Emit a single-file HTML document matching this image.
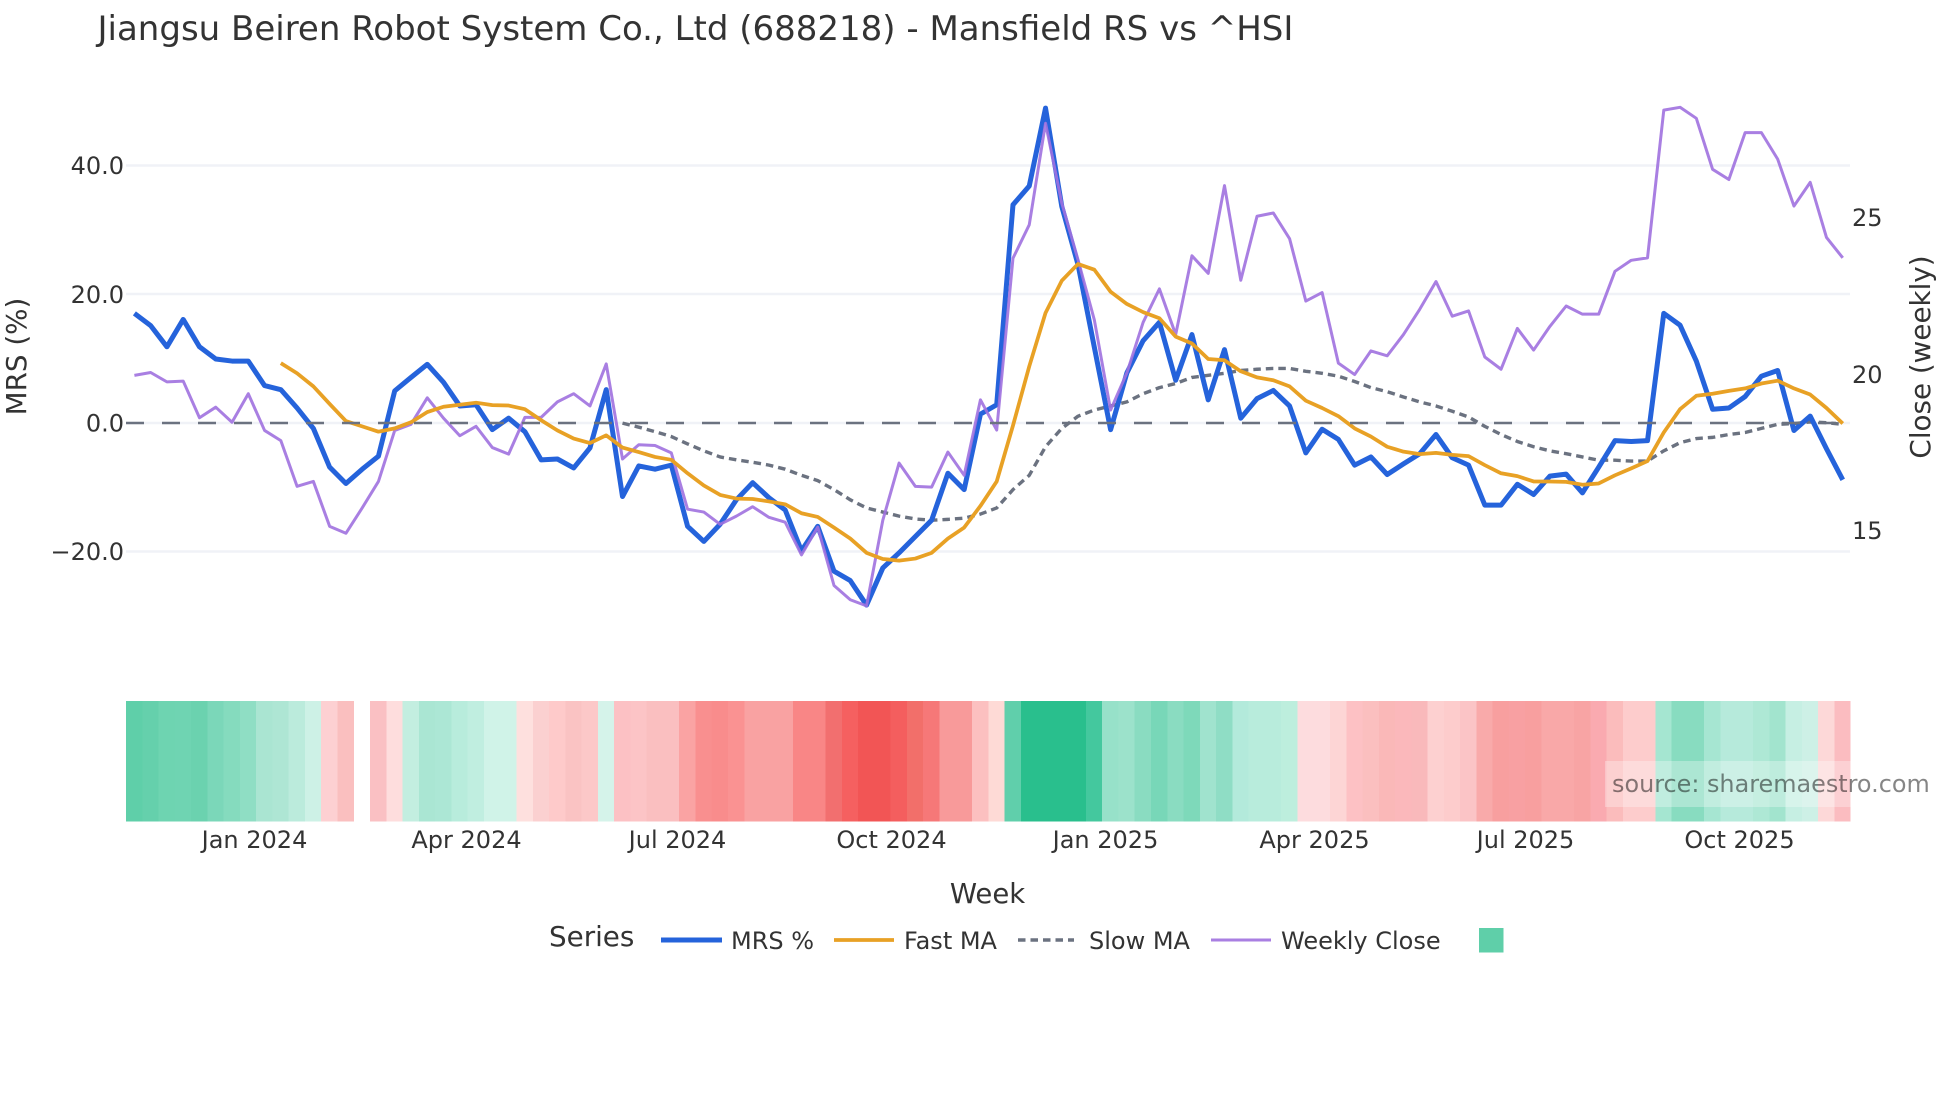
<!DOCTYPE html>
<html lang="en"><head><meta charset="utf-8"><title>Mansfield RS</title>
<style>
html,body{margin:0;padding:0;background:#fff;width:1960px;height:1102px;overflow:hidden}
svg{display:block}
text{font-family:"DejaVu Sans",sans-serif;fill:#333}
.l{fill:none;vector-effect:non-scaling-stroke;stroke-linejoin:round}
</style></head><body>
<svg width="1960" height="1102" viewBox="0 0 1960 1102" xmlns="http://www.w3.org/2000/svg">
<rect width="1960" height="1102" fill="#fff"/>
<text x="97.5" y="40" font-size="34">Jiangsu Beiren Robot System Co., Ltd (688218) - Mansfield RS vs ^HSI</text>
<g stroke="#f0f2f7" stroke-width="2.5">
<line x1="126" x2="1850" y1="165.5" y2="165.5"/><line x1="126" x2="1850" y1="294" y2="294"/><line x1="126" x2="1850" y1="423" y2="423"/><line x1="126" x2="1850" y1="551.5" y2="551.5"/>
</g>
<g font-size="24" text-anchor="end">
<text x="124" y="174">40.0</text><text x="124" y="303">20.0</text><text x="124" y="431.5">0.0</text><text x="124" y="560">−20.0</text>
</g>
<g font-size="24">
<text x="1852" y="226">25</text><text x="1852" y="383">20</text><text x="1852" y="539">15</text>
</g>
<text font-size="27.75" text-anchor="middle" transform="translate(26,356.5) rotate(-90)">MRS (%)</text>
<text font-size="27.75" text-anchor="middle" transform="translate(1930,357) rotate(-90)">Close (weekly)</text>
<g transform="translate(134.4,0) scale(16.27,0.408)">
<polyline class="l" stroke="#6b7280" stroke-width="3.4" stroke-dasharray="7.5 5" points="30,1037 31,1047 32,1058 33,1070 34,1088 35,1105 36,1120 37,1127 38,1133 39,1140 40,1150 41,1165 42,1178 43,1200 44,1225 45,1245 46,1255 47,1265 48,1272 49,1275 50,1273 51,1270 52,1260 53,1245 54,1200 55,1165 56,1095 57,1050 58,1020 59,1005 60,995 61,985 62,965 63,950 64,940 65,925 66,920 67,915 68,908 69,905 70,903 71,903 72,910 73,915 74,922 75,935 76,950 77,960 78,973 79,985 80,995 81,1008 82,1022 83,1045 84,1065 85,1082 86,1095 87,1105 88,1112 89,1120 90,1128 91,1128 92,1130 93,1130 94,1105 95,1085 96,1075 97,1072 98,1065 99,1060 100,1050 101,1040 102,1038 103,1034 104,1036 105,1040"/>
<polyline class="l" stroke="#2563db" stroke-width="5" points="0,768 1,798 2,850 3,783 4,850 5,880 6,885 7,885 8,945 9,955 10,1000 11,1050 12,1145 13,1185 14,1150 15,1118 16,958 17,925 18,893 19,937 20,995 21,992 22,1053 23,1025 24,1058 25,1127 26,1125 27,1147 28,1098 29,955 30,1217 31,1142 32,1150 33,1140 34,1290 35,1327 36,1285 37,1225 38,1183 39,1220 40,1250 41,1350 42,1290 43,1400 44,1423 45,1483 46,1392 47,1355 48,1315 49,1275 50,1160 51,1200 52,1015 53,992 54,502 55,456 56,265 57,506 58,649 59,851 60,1053 61,914 62,835 63,790 64,932 65,820 66,980 67,857 68,1025 69,977 70,957 71,995 72,1110 73,1052 74,1077 75,1140 76,1120 77,1163 78,1137 79,1112 80,1065 81,1122 82,1140 83,1238 84,1238 85,1187 86,1212 87,1167 88,1162 89,1208 90,1145 91,1080 92,1082 93,1080 94,768 95,797 96,885 97,1003 98,1000 99,972 100,922 101,908 102,1055 103,1020 104,1100 105,1176"/>
<polyline class="l" stroke="#a071df" stroke-opacity=".9" stroke-width="3" points="0,920 1,913 2,936 3,934 4,1024 5,998 6,1035 7,965 8,1055 9,1080 10,1192 11,1180 12,1290 13,1307 14,1245 15,1180 16,1055 17,1040 18,975 19,1025 20,1068 21,1045 22,1097 23,1113 24,1023 25,1023 26,985 27,965 28,995 29,892 30,1125 31,1090 32,1092 33,1110 34,1248 35,1255 36,1285 37,1265 38,1242 39,1268 40,1280 41,1360 42,1292 43,1435 44,1470 45,1485 46,1275 47,1135 48,1192 49,1194 50,1108 51,1165 52,980 53,1054 54,633 55,551 56,302 57,498 58,637 59,784 60,1005 61,914 62,790 63,708 64,820 65,627 66,670 67,455 68,687 69,530 70,522 71,585 72,738 73,717 74,890 75,918 76,860 77,872 78,820 79,758 80,690 81,775 82,762 83,875 84,905 85,805 86,858 87,800 88,750 89,770 90,770 91,665 92,638 93,632 94,270 95,263 96,290 97,415 98,440 99,325 100,325 101,390 102,505 103,447 104,582 105,632"/>
<polyline class="l" stroke="#e8a125" stroke-width="3.75" points="9,890 10,915 11,947 12,990 13,1032 14,1045 15,1058 16,1050 17,1035 18,1010 19,997 20,992 21,987 22,993 23,994 24,1003 25,1030 26,1055 27,1075 28,1086 29,1067 30,1097 31,1108 32,1120 33,1127 34,1160 35,1190 36,1213 37,1222 38,1223 39,1229 40,1236 41,1258 42,1267 43,1293 44,1320 45,1355 46,1370 47,1374 48,1369 49,1355 50,1320 51,1293 52,1240 53,1180 54,1043 55,898 56,767 57,688 58,647 59,661 60,715 61,745 62,765 63,780 64,825 65,842 66,880 67,883 68,910 69,925 70,932 71,947 72,982 73,1000 74,1020 75,1050 76,1070 77,1095 78,1107 79,1113 80,1110 81,1115 82,1118 83,1140 84,1160 85,1167 86,1180 87,1180 88,1181 89,1188 90,1185 91,1165 92,1148 93,1130 94,1060 95,1003 96,970 97,965 98,958 99,952 100,940 101,933 102,952 103,967 104,1000 105,1038"/>
</g>
<line x1="126" x2="1850" y1="423" y2="423" stroke="#6b7280" stroke-width="2.5" stroke-dasharray="18 18"/>
<g transform="translate(126,701) scale(16.27,120.5)" shape-rendering="crispEdges">
<rect x="0" width="1.02" height="1" fill="#5fcfa9"/><rect x="1" width="1.02" height="1" fill="#65d0ac"/><rect x="2" width="1.02" height="1" fill="#6ed4b1"/><rect x="3" width="1.02" height="1" fill="#6fd4b2"/><rect x="4" width="1.02" height="1" fill="#6bd2af"/><rect x="5" width="1.02" height="1" fill="#7bd7b9"/><rect x="6" width="1.02" height="1" fill="#85dbbe"/><rect x="7" width="1.02" height="1" fill="#8fdec4"/><rect x="8" width="1.02" height="1" fill="#aae5d2"/><rect x="9" width="1.02" height="1" fill="#aee6d4"/><rect x="10" width="1.02" height="1" fill="#bbebdc"/><rect x="11" width="1.02" height="1" fill="#cdf1e6"/>
<rect x="12" width="1.02" height="1" fill="#fdd0d2"/><rect x="13" width="1" height="1" fill="#fabfbf"/>
<rect x="15" width="1.02" height="1" fill="#fac0c3"/><rect x="16" width="1.02" height="1" fill="#fedddd"/><rect x="17" width="1.02" height="1" fill="#c3eee0"/><rect x="18" width="1.02" height="1" fill="#aae6d3"/><rect x="19" width="1.02" height="1" fill="#ace7d5"/><rect x="20" width="1.02" height="1" fill="#b8ecdc"/><rect x="21" width="1.02" height="1" fill="#c0eee0"/><rect x="22" width="1.02" height="1" fill="#d0f3e8"/><rect x="23" width="1.02" height="1" fill="#d0f3e8"/><rect x="24" width="1.02" height="1" fill="#fee0de"/><rect x="25" width="1.02" height="1" fill="#fbd0d0"/><rect x="26" width="1.02" height="1" fill="#fecaca"/><rect x="27" width="1.02" height="1" fill="#fac3c3"/><rect x="28" width="1.02" height="1" fill="#fcc8c8"/><rect x="29" width="1.02" height="1" fill="#d5f3ea"/><rect x="30" width="1.02" height="1" fill="#fcc1c4"/><rect x="31" width="1.02" height="1" fill="#fcc4c6"/><rect x="32" width="1.02" height="1" fill="#fabfc0"/><rect x="33" width="1.02" height="1" fill="#fabfc0"/><rect x="34" width="1.02" height="1" fill="#faa3a3"/><rect x="35" width="1.02" height="1" fill="#f98f8f"/><rect x="36" width="1.02" height="1" fill="#f98c8c"/><rect x="37" width="1.02" height="1" fill="#fa9292"/><rect x="38" width="1.02" height="1" fill="#f9a2a2"/><rect x="39" width="1.02" height="1" fill="#f9a2a2"/><rect x="40" width="1.02" height="1" fill="#f9a2a2"/><rect x="41" width="1.02" height="1" fill="#f98686"/><rect x="42" width="1.02" height="1" fill="#f98686"/><rect x="43" width="1.02" height="1" fill="#f26f6f"/><rect x="44" width="1.02" height="1" fill="#f56060"/><rect x="45" width="1.02" height="1" fill="#f25555"/><rect x="46" width="1.02" height="1" fill="#f25555"/><rect x="47" width="1.02" height="1" fill="#f45e5e"/><rect x="48" width="1.02" height="1" fill="#f26f6a"/><rect x="49" width="1.02" height="1" fill="#f67878"/><rect x="50" width="1.02" height="1" fill="#f89a9a"/><rect x="51" width="1.02" height="1" fill="#f89a9a"/><rect x="52" width="1.02" height="1" fill="#fcc0c0"/><rect x="53" width="1.02" height="1" fill="#fedad6"/><rect x="54" width="1.02" height="1" fill="#60cfab"/><rect x="55" width="1.02" height="1" fill="#29bf8d"/><rect x="56" width="1.02" height="1" fill="#29bf8d"/><rect x="57" width="1.02" height="1" fill="#29bf8d"/><rect x="58" width="1.02" height="1" fill="#29bf8d"/><rect x="59" width="1.02" height="1" fill="#44c89e"/><rect x="60" width="1.02" height="1" fill="#97e1c9"/><rect x="61" width="1.02" height="1" fill="#9ce2cb"/><rect x="62" width="1.02" height="1" fill="#8adcc1"/><rect x="63" width="1.02" height="1" fill="#78d7b8"/><rect x="64" width="1.02" height="1" fill="#8adcc1"/><rect x="65" width="1.02" height="1" fill="#7ed9ba"/><rect x="66" width="1.02" height="1" fill="#a0e3ce"/><rect x="67" width="1.02" height="1" fill="#8fddc5"/><rect x="68" width="1.02" height="1" fill="#b3eadb"/><rect x="69" width="1.02" height="1" fill="#b8ecdc"/><rect x="70" width="1.02" height="1" fill="#b8ecdc"/><rect x="71" width="1.02" height="1" fill="#bdeedd"/><rect x="72" width="1.02" height="1" fill="#fddcde"/><rect x="73" width="1.02" height="1" fill="#fddcde"/><rect x="74" width="1.02" height="1" fill="#fdd5d5"/><rect x="75" width="1.02" height="1" fill="#fdc1c4"/><rect x="76" width="1.02" height="1" fill="#fbbfbf"/><rect x="77" width="1.02" height="1" fill="#fab8b8"/><rect x="78" width="1.02" height="1" fill="#fbb8bb"/><rect x="79" width="1.02" height="1" fill="#f9b9bb"/><rect x="80" width="1.02" height="1" fill="#fdd0d0"/><rect x="81" width="1.02" height="1" fill="#fdcccc"/><rect x="82" width="1.02" height="1" fill="#fbc4c6"/><rect x="83" width="1.02" height="1" fill="#f9aaaa"/><rect x="84" width="1.02" height="1" fill="#f89f9f"/><rect x="85" width="1.02" height="1" fill="#f8a0a2"/><rect x="86" width="1.02" height="1" fill="#f89f9f"/><rect x="87" width="1.02" height="1" fill="#f9a8a8"/><rect x="88" width="1.02" height="1" fill="#f9a8a8"/><rect x="89" width="1.02" height="1" fill="#f8a4a4"/><rect x="90" width="1.02" height="1" fill="#faaab0"/><rect x="91" width="1.02" height="1" fill="#fbbcbc"/><rect x="92" width="1.02" height="1" fill="#fdcccc"/><rect x="93" width="1.02" height="1" fill="#fdcccc"/><rect x="94" width="1.02" height="1" fill="#a5e6d1"/><rect x="95" width="1.02" height="1" fill="#88dcc0"/><rect x="96" width="1.02" height="1" fill="#88dcc0"/><rect x="97" width="1.02" height="1" fill="#a6e6d2"/><rect x="98" width="1.02" height="1" fill="#b6eadb"/><rect x="99" width="1.02" height="1" fill="#b6eadb"/><rect x="100" width="1.02" height="1" fill="#aee8d5"/><rect x="101" width="1.02" height="1" fill="#a2e4ce"/><rect x="102" width="1.02" height="1" fill="#c6efe3"/><rect x="103" width="1.02" height="1" fill="#cdf0e6"/><rect x="104" width="1.02" height="1" fill="#fdd8d8"/><rect x="105" width="1" height="1" fill="#fbbcc0"/>
</g>
<rect x="1605" y="761" width="249" height="46" fill="#fff" fill-opacity=".3"/>
<text x="1612" y="792" font-size="23.9" style="fill:#000" fill-opacity=".48">source: sharemaestro.com</text>
<g font-size="24" text-anchor="middle">
<text x="254.5" y="848">Jan 2024</text><text x="466.5" y="848">Apr 2024</text><text x="677.5" y="848">Jul 2024</text><text x="891.5" y="848">Oct 2024</text><text x="1105.5" y="848">Jan 2025</text><text x="1314.5" y="848">Apr 2025</text><text x="1525.5" y="848">Jul 2025</text><text x="1739.5" y="848">Oct 2025</text>
</g>
<text x="987.5" y="903" font-size="27.5" text-anchor="middle">Week</text>
<text x="549" y="946" font-size="27.75">Series</text>
<line x1="661" x2="722" y1="940" y2="940" stroke="#2563db" stroke-width="5"/>
<text x="731" y="949" font-size="24">MRS %</text>
<line x1="834" x2="894" y1="940" y2="940" stroke="#e8a125" stroke-width="3.75"/>
<text x="904" y="949" font-size="24">Fast MA</text>
<line x1="1018" x2="1074" y1="940" y2="940" stroke="#6b7280" stroke-width="3.4" stroke-dasharray="7.5 5"/>
<text x="1089" y="949" font-size="24">Slow MA</text>
<line x1="1211" x2="1271" y1="940" y2="940" stroke="#a071df" stroke-opacity=".9" stroke-width="3"/>
<text x="1281" y="949" font-size="24">Weekly Close</text>
<rect x="1479" y="928" width="24.5" height="24.5" fill="#5fcfa9"/>
</svg>
</body></html>
